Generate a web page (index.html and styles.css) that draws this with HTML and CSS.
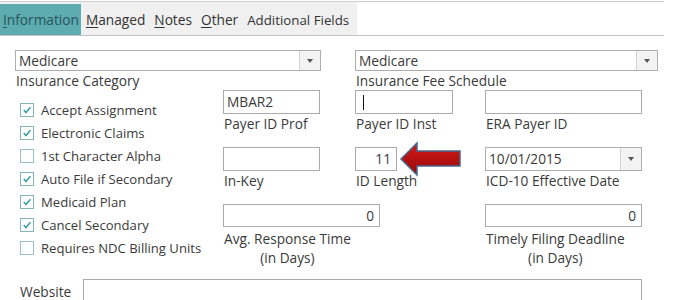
FILE: index.html
```html
<!DOCTYPE html>
<html lang="en">
<head>
  <meta charset="UTF-8">
  <title>Insurance Information</title>
  <link rel="stylesheet" href="styles.css">
</head>
<body>
  <div class="window">

    <!-- Tab strip -->
    <div class="tabbar">
      <ul class="tabs">
        <li class="tab active"><u>I</u>nformation</li>
        <li class="tab"><u>M</u>anaged</li>
        <li class="tab"><u>N</u>otes</li>
        <li class="tab"><u>O</u>ther</li>
        <li class="tab">Additional Fields</li>
      </ul>
    </div>

    <div class="panel">
      <!-- Combos -->
      <div class="top-row">
        <div class="field">
          <div class="combo">
            <span class="combo-value">Medicare</span>
            <span class="combo-btn"><i class="caret-down"></i></span>
          </div>
          <div class="label">Insurance Category</div>
        </div>
        <div class="field">
          <div class="combo">
            <span class="combo-value">Medicare</span>
            <span class="combo-btn"><i class="caret-down"></i></span>
          </div>
          <div class="label">Insurance Fee Schedule</div>
        </div>
      </div>

      <div class="middle">
        <!-- Checkboxes -->
        <ul class="checks">
          <li class="check on"><span class="box"><svg viewBox="0 0 13 13"><path d="M3 6.6 L5.4 9.2 L10.2 3.6"/></svg></span>Accept Assignment</li>
          <li class="check on"><span class="box"><svg viewBox="0 0 13 13"><path d="M3 6.6 L5.4 9.2 L10.2 3.6"/></svg></span>Electronic Claims</li>
          <li class="check"><span class="box"></span>1st Character Alpha</li>
          <li class="check on"><span class="box"><svg viewBox="0 0 13 13"><path d="M3 6.6 L5.4 9.2 L10.2 3.6"/></svg></span>Auto File if Secondary</li>
          <li class="check on"><span class="box"><svg viewBox="0 0 13 13"><path d="M3 6.6 L5.4 9.2 L10.2 3.6"/></svg></span>Medicaid Plan</li>
          <li class="check on"><span class="box"><svg viewBox="0 0 13 13"><path d="M3 6.6 L5.4 9.2 L10.2 3.6"/></svg></span>Cancel Secondary</li>
          <li class="check"><span class="box"></span>Requires NDC Billing Units</li>
        </ul>

        <!-- Fields -->
        <div class="fields">
          <div class="field col-b">
            <div class="textbox">MBAR2</div>
            <div class="label">Payer ID Prof</div>
          </div>
          <div class="field col-c">
            <div class="textbox"><span class="cursor"></span></div>
            <div class="label">Payer ID Inst</div>
          </div>
          <div class="field col-d">
            <div class="textbox"></div>
            <div class="label">ERA Payer ID</div>
          </div>

          <div class="field col-b">
            <div class="textbox"></div>
            <div class="label">In-Key</div>
          </div>
          <div class="field col-c">
            <div class="textbox short num">11</div>
            <div class="label">ID Length</div>
          </div>
          <div class="field col-d">
            <div class="combo tall">
              <span class="combo-value">10/01/2015</span>
              <span class="combo-btn"><i class="caret-down"></i></span>
            </div>
            <div class="label">ICD-10 Effective Date</div>
          </div>

          <div class="field col-wide row-3">
            <div class="textbox num wide">0</div>
            <div class="label center">Avg. Response Time<br>(in Days)</div>
          </div>
          <div class="field col-d row-3">
            <div class="textbox num wide">0</div>
            <div class="label center">Timely Filing Deadline<br>(in Days)</div>
          </div>
        </div>
      </div>

      <div class="website-row">
        <span class="website-label">Website</span>
        <div class="textbox website"></div>
      </div>
    </div>

    <!-- Annotation arrow pointing at ID Length -->
    <svg class="arrow" viewBox="0 0 66 38" width="66" height="38">
      <defs>
        <linearGradient id="red" x1="0" y1="0" x2="0" y2="1">
          <stop offset="0" stop-color="#d41a1a"/>
          <stop offset="1" stop-color="#960808"/>
        </linearGradient>
      </defs>
      <path d="M3 19 L19 3 L19 11 L62 11 L62 26 L19 26 L19 35 Z" fill="url(#red)" stroke="#46688f" stroke-width="1.5" stroke-linejoin="miter"/>
    </svg>
  </div>
</body>
</html>
```

FILE: styles.css
```css
* {
  box-sizing: border-box;
}

body {
  margin: 0;
  width: 676px;
  height: 300px;
  overflow: hidden;
  background: #fff;
  color: #3a3a3a;
  font-family: "Open Sans", "Noto Sans", sans-serif;
  font-size: 13.7px;
}

.window {
  position: relative;
}

/* Tab strip */
.tabbar {
  margin-top: 1px;
  width: 664px;
  height: 35px;
  border-top: 1px solid #cfcfcf;
  border-bottom: 1px solid #c4c4c4;
}

.tabs {
  display: flex;
  list-style: none;
  margin: 0;
  padding: 2px 3px 0 0;
  height: 100%;
  width: max-content;
  background: #f0f0f0;
}

.tab {
  padding: 0 4.5px;
  line-height: 32px;
  color: #333;
}

.tab.active {
  padding: 0 2px 0 3px;
  margin-right: 0.5px;
  background: #5eacb0;
  color: #27535a;
}

.tab:last-child {
  font-size: 13.3px;
}

.tab u {
  text-decoration-thickness: 1px;
  text-underline-offset: 2px;
}

/* Panel */
.panel {
  padding-left: 15px;
}

.top-row {
  display: grid;
  grid-template-columns: 306px 303px;
  column-gap: 34px;
  margin-top: 14px;
}

.label {
  line-height: 19px;
  padding-left: 1px;
  white-space: nowrap;
}

.label.center {
  display: inline-block;
  text-align: center;
  margin-top: 1px;
}

.combo {
  display: flex;
  height: 21px;
  border: 1px solid #adadad;
  background: #fff;
}

.combo.tall {
  height: 24px;
}

.combo-value {
  flex: 1;
  padding-left: 3px;
  line-height: 19px;
}

.combo.tall .combo-value {
  line-height: 22px;
}

.combo-btn {
  display: flex;
  align-items: center;
  justify-content: center;
  width: 21px;
  border-left: 1px solid #d2d2d2;
  background: #f3f3f3;
}

.caret-down {
  width: 0;
  height: 0;
  border-left: 3.5px solid transparent;
  border-right: 3.5px solid transparent;
  border-top: 4px solid #555;
}

/* Middle: checkboxes + fields */
.middle {
  display: flex;
}

.checks {
  list-style: none;
  margin: 0;
  padding: 8px 0 0 5px;
  width: 208px;
  font-size: 13.1px;
}

.check {
  display: flex;
  align-items: center;
  gap: 7px;
  height: 23px;
  white-space: nowrap;
}

.box {
  display: inline-flex;
  flex: none;
  width: 14px;
  height: 14px;
  border: 1px solid #9cc1c4;
  background: #fff;
}

.check.on .box {
  border-color: #86b4b8;
}

.box svg {
  width: 12px;
  height: 12px;
  fill: none;
  stroke: #3c9ea6;
  stroke-width: 1.7;
}

.fields {
  display: grid;
  grid-template-columns: 97px 35px 98px 32px 157px;
  row-gap: 14px;
  align-content: start;
}

.col-b { grid-column: 1; }
.col-c { grid-column: 3; }
.col-d { grid-column: 5; }
.col-wide { grid-column: 1 / 5; }

.row-3 .textbox {
  height: 23px;
  margin-bottom: 1px;
}

.textbox {
  height: 24px;
  border: 1px solid #ababab;
  background: #fff;
  padding: 0 4px 0 3px;
  line-height: 22px;
  white-space: nowrap;
}

.textbox.num {
  text-align: right;
  padding-right: 5px;
}

.textbox.short {
  width: 42px;
}

.textbox.wide {
  width: 157px;
}

.cursor {
  display: inline-block;
  width: 1px;
  height: 15px;
  margin: 4px 0 0 4px;
  vertical-align: top;
  background: #111;
}

/* Website row */
.website-row {
  display: flex;
  align-items: center;
  margin-top: 12px;
  padding-left: 5px;
}

.website-label {
  width: 63px;
}

.textbox.website {
  width: 559px;
}

/* Annotation arrow */
.arrow {
  position: absolute;
  left: 398px;
  top: 139px;
}
```
